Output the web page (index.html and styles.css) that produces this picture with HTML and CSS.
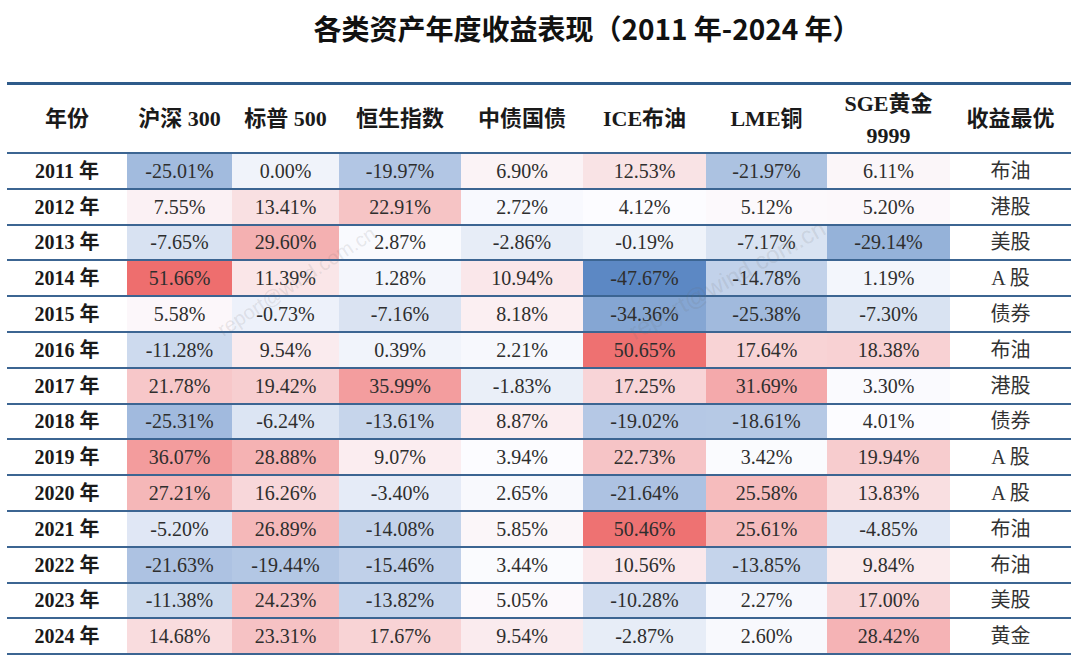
FILE: index.html
```html
<!DOCTYPE html>
<html lang="zh-CN">
<head>
<meta charset="utf-8">
<title>各类资产年度收益表现</title>
<link rel="stylesheet" href="styles.css">
</head>
<body>
<div class="page">
  <h1 class="title">各类资产年度收益表现（2011 年-2024 年）</h1>
  <div class="table-wrap">
    <table class="returns">
      <colgroup>
        <col class="c-year"><col class="c-a"><col class="c-b"><col class="c-c"><col class="c-d"><col class="c-e"><col class="c-f"><col class="c-g"><col class="c-h">
      </colgroup>
      <thead>
        <tr>
          <th>年份</th><th>沪深 300</th><th>标普 500</th><th>恒生指数</th><th>中债国债</th><th>ICE布油</th><th>LME铜</th><th class="two">SGE黄金<br>9999</th><th>收益最优</th>
        </tr>
      </thead>
      <tbody>
        <tr><td class="yr">2011 年</td><td class="v">-25.01%</td><td class="v">0.00%</td><td class="v">-19.97%</td><td class="v">6.90%</td><td class="v">12.53%</td><td class="v">-21.97%</td><td class="v">6.11%</td><td class="best">布油</td></tr>
        <tr><td class="yr">2012 年</td><td class="v">7.55%</td><td class="v">13.41%</td><td class="v">22.91%</td><td class="v">2.72%</td><td class="v">4.12%</td><td class="v">5.12%</td><td class="v">5.20%</td><td class="best">港股</td></tr>
        <tr><td class="yr">2013 年</td><td class="v">-7.65%</td><td class="v">29.60%</td><td class="v">2.87%</td><td class="v">-2.86%</td><td class="v">-0.19%</td><td class="v">-7.17%</td><td class="v">-29.14%</td><td class="best">美股</td></tr>
        <tr><td class="yr">2014 年</td><td class="v">51.66%</td><td class="v">11.39%</td><td class="v">1.28%</td><td class="v">10.94%</td><td class="v">-47.67%</td><td class="v">-14.78%</td><td class="v">1.19%</td><td class="best">A 股</td></tr>
        <tr><td class="yr">2015 年</td><td class="v">5.58%</td><td class="v">-0.73%</td><td class="v">-7.16%</td><td class="v">8.18%</td><td class="v">-34.36%</td><td class="v">-25.38%</td><td class="v">-7.30%</td><td class="best">债券</td></tr>
        <tr><td class="yr">2016 年</td><td class="v">-11.28%</td><td class="v">9.54%</td><td class="v">0.39%</td><td class="v">2.21%</td><td class="v">50.65%</td><td class="v">17.64%</td><td class="v">18.38%</td><td class="best">布油</td></tr>
        <tr><td class="yr">2017 年</td><td class="v">21.78%</td><td class="v">19.42%</td><td class="v">35.99%</td><td class="v">-1.83%</td><td class="v">17.25%</td><td class="v">31.69%</td><td class="v">3.30%</td><td class="best">港股</td></tr>
        <tr><td class="yr">2018 年</td><td class="v">-25.31%</td><td class="v">-6.24%</td><td class="v">-13.61%</td><td class="v">8.87%</td><td class="v">-19.02%</td><td class="v">-18.61%</td><td class="v">4.01%</td><td class="best">债券</td></tr>
        <tr><td class="yr">2019 年</td><td class="v">36.07%</td><td class="v">28.88%</td><td class="v">9.07%</td><td class="v">3.94%</td><td class="v">22.73%</td><td class="v">3.42%</td><td class="v">19.94%</td><td class="best">A 股</td></tr>
        <tr><td class="yr">2020 年</td><td class="v">27.21%</td><td class="v">16.26%</td><td class="v">-3.40%</td><td class="v">2.65%</td><td class="v">-21.64%</td><td class="v">25.58%</td><td class="v">13.83%</td><td class="best">A 股</td></tr>
        <tr><td class="yr">2021 年</td><td class="v">-5.20%</td><td class="v">26.89%</td><td class="v">-14.08%</td><td class="v">5.85%</td><td class="v">50.46%</td><td class="v">25.61%</td><td class="v">-4.85%</td><td class="best">布油</td></tr>
        <tr><td class="yr">2022 年</td><td class="v">-21.63%</td><td class="v">-19.44%</td><td class="v">-15.46%</td><td class="v">3.44%</td><td class="v">10.56%</td><td class="v">-13.85%</td><td class="v">9.84%</td><td class="best">布油</td></tr>
        <tr><td class="yr">2023 年</td><td class="v">-11.38%</td><td class="v">24.23%</td><td class="v">-13.82%</td><td class="v">5.05%</td><td class="v">-10.28%</td><td class="v">2.27%</td><td class="v">17.00%</td><td class="best">美股</td></tr>
        <tr><td class="yr">2024 年</td><td class="v">14.68%</td><td class="v">23.31%</td><td class="v">17.67%</td><td class="v">9.54%</td><td class="v">-2.87%</td><td class="v">2.60%</td><td class="v">28.42%</td><td class="best">黄金</td></tr>
      </tbody>
    </table>
    <span class="wm wm1">report@wind.com.cn</span>
    <span class="wm wm2">report@wind.com.cn</span>
  </div>
</div>
<script src="script.js"></script>
</body>
</html>
```

FILE: styles.css
```css
html, body {
  margin: 0;
  padding: 0;
  background: #ffffff;
}

.page {
  width: 1080px;
  padding-top: 8px;
}

.title {
  margin: 0 0 34px 0;
  padding-left: 94px;
  height: 40px;
  line-height: 40px;
  text-align: center;
  font-family: "Noto Sans CJK SC", "Noto Sans", sans-serif;
  font-weight: 700;
  font-size: 28px;
  color: #111111;
}

.table-wrap {
  position: relative;
  margin-left: 7px;
  width: 1064px;
}

.returns {
  width: 1064px;
  table-layout: fixed;
  border-collapse: separate;
  border-spacing: 0;
  font-family: "Liberation Serif", "Noto Sans CJK SC", serif;
}

.c-year { width: 120px; }
.c-a { width: 105px; }
.c-b { width: 107px; }
.c-c { width: 122px; }
.c-d { width: 122px; }
.c-e { width: 123px; }
.c-f { width: 121px; }
.c-g { width: 123px; }
.c-h { width: 121px; }

.returns thead tr {
  height: 72px;
}

.returns th {
  border-top: 3px solid #2f5b8a;
  border-bottom: 2px solid #3c6592;
  padding: 0;
  font-size: 22px;
  font-weight: 700;
  line-height: 26px;
  color: #1a1a1a;
  text-align: center;
  vertical-align: middle;
}

.returns th.two {
  line-height: 32px;
  padding-top: 2px;
}

.returns tbody tr {
  height: 35.8px;
}

.returns td {
  border-bottom: 2px solid #3c6592;
  padding: 0;
  font-size: 20px;
  line-height: 24px;
  color: #2e2e2e;
  text-align: center;
  vertical-align: middle;
  white-space: nowrap;
}

.returns td.yr {
  font-weight: 700;
  color: #1a1a1a;
}

.returns td.best {
  color: #333333;
}

.wm {
  position: absolute;
  font-family: "Liberation Sans", sans-serif;
  font-size: 20px;
  color: rgba(110, 110, 110, 0.15);
  white-space: nowrap;
  pointer-events: none;
  transform-origin: center center;
}

.wm1 {
  left: 198px;
  top: 188px;
  transform: rotate(-33deg);
}

.wm2 {
  left: 610px;
  top: 184px;
  font-size: 24px;
  transform: rotate(-29deg);
}
```

FILE: script.js
```js
(function () {
  var cells = Array.prototype.slice.call(document.querySelectorAll('.returns td.v'));
  var vals = cells.map(function (c) { return parseFloat(c.textContent); });
  var sorted = vals.slice().sort(function (a, b) { return a - b; });
  var n = sorted.length;
  var rank = 0.5 * (n - 1);
  var lo = Math.floor(rank), hi = Math.ceil(rank);
  var mid = sorted[lo] + (sorted[hi] - sorted[lo]) * (rank - lo);
  var min = sorted[0], max = sorted[n - 1];
  var white = [252, 252, 255], red = [238, 110, 110], blue = [92, 136, 196];
  function mix(a, b, t) {
    return 'rgb(' + a.map(function (x, i) { return Math.round(x + (b[i] - x) * t); }).join(',') + ')';
  }
  cells.forEach(function (c, i) {
    var v = vals[i];
    var col = v >= mid ? mix(white, red, (v - mid) / (max - mid)) : mix(white, blue, (mid - v) / (mid - min));
    c.style.backgroundColor = col;
  });
})();
```
